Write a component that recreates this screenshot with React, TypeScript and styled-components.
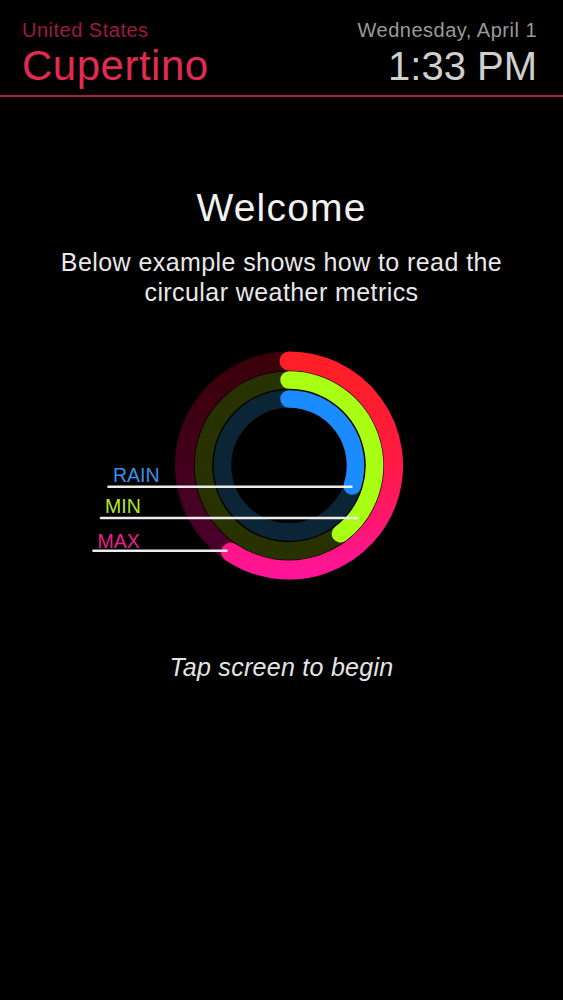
import React from 'react';
import styled, { createGlobalStyle } from 'styled-components';

const GlobalStyle = createGlobalStyle`
  html, body {
    margin: 0;
    padding: 0;
    background: #000;
  }
  body {
    font-family: "Liberation Sans", Arial, sans-serif;
    -webkit-font-smoothing: antialiased;
  }
`;

const Screen = styled.div`
  width: 563px;
  min-height: 1000px;
  background: #000;
  display: flex;
  flex-direction: column;
  align-items: center;
`;

const Header = styled.header`
  align-self: stretch;
  display: flex;
  justify-content: space-between;
  padding: 19px 26px 6px 22px;
`;

const HeaderCol = styled.div<{ $align?: 'left' | 'right' }>`
  display: flex;
  flex-direction: column;
  gap: 2px;
  text-align: ${(p) => p.$align ?? 'left'};
`;

const SmallLine = styled.div<{ $color: string }>`
  font-size: 20px;
  line-height: 22px;
  letter-spacing: 0.5px;
  color: ${(p) => p.$color};
  white-space: nowrap;
`;

const BigLine = styled.div<{ $color: string; $size: number; $spacing?: number }>`
  font-size: ${(p) => p.$size}px;
  line-height: 46px;
  letter-spacing: ${(p) => p.$spacing ?? 0}px;
  color: ${(p) => p.$color};
  white-space: nowrap;
`;

const Divider = styled.div`
  align-self: stretch;
  height: 2px;
  background: #b01a3e;
`;

const Title = styled.h1`
  margin: 89px 0 0;
  font-size: 39px;
  line-height: 44px;
  letter-spacing: 1.2px;
  font-weight: 400;
  color: #f2f2f2;
`;

const Subtitle = styled.p`
  margin: 17px 0 0;
  font-size: 25px;
  line-height: 30px;
  letter-spacing: 0.42px;
  color: #e8e8e8;
  text-align: center;
`;

const Diagram = styled.svg`
  display: block;
  margin-top: 32px;
  align-self: stretch;
`;

const Hint = styled.p`
  margin: 63px 0 0;
  font-size: 25px;
  line-height: 30px;
  letter-spacing: 0.28px;
  font-style: italic;
  color: #e4e4e4;
`;

const CX = 289;
const CY = 466.5;

const pt = (r: number, deg: number) => {
  const a = (deg * Math.PI) / 180;
  return [CX + r * Math.sin(a), CY - r * Math.cos(a)];
};

const arc = (r: number, deg: number) => {
  const [x0, y0] = pt(r, 0);
  const [x1, y1] = pt(r, deg);
  return `M ${x0} ${y0} A ${r} ${r} 0 ${deg > 180 ? 1 : 0} 1 ${x1} ${y1}`;
};

const rings = [
  { r: 104.5, w: 19, deg: 214, color: 'url(#redArc)', track: 'url(#redTrack)' },
  { r: 85.5, w: 17.5, deg: 143, color: '#a8ff14', track: '#283100' },
  { r: 66.5, w: 17.5, deg: 108, color: '#1a8cff', track: '#0c2536' },
];

const labels = [
  { text: 'RAIN', color: '#3a8fe6', x: 113, y: 482.7, lx: 108.5, ly: 487.7, ex: 351.5 },
  { text: 'MIN', color: '#b4e62a', x: 105, y: 514.3, lx: 101, ly: 519, ex: 357 },
  { text: 'MAX', color: '#e8208c', x: 97.5, y: 549.3, lx: 93.5, ly: 551.7, ex: 226.5 },
];

function RingChart() {
  return (
    <Diagram width={563} height={250} viewBox="0 340 563 250">
      <defs>
        <linearGradient id="redArc" gradientUnits="userSpaceOnUse" x1="0" y1="360" x2="0" y2="572">
          <stop offset="0" stopColor="#ff1f24" />
          <stop offset="0.45" stopColor="#ff1a3e" />
          <stop offset="1" stopColor="#ff1496" />
        </linearGradient>
        <linearGradient id="redTrack" gradientUnits="userSpaceOnUse" x1="0" y1="360" x2="0" y2="572">
          <stop offset="0" stopColor="#3a0008" />
          <stop offset="1" stopColor="#4c0030" />
        </linearGradient>
      </defs>
      {rings.map((g) => (
        <g key={g.r}>
          <circle cx={CX} cy={CY} r={g.r} fill="none" stroke={g.track} strokeWidth={g.w} />
          <path d={arc(g.r, g.deg)} fill="none" stroke={g.color} strokeWidth={g.w} strokeLinecap="round" />
        </g>
      ))}
      {labels.map((l) => (
        <g key={l.text}>
          <text
            x={l.x}
            y={l.y}
            fill={l.color}
            fontSize="19.5"
            fontFamily='"Liberation Sans", Arial, sans-serif'
          >
            {l.text}
          </text>
          <line x1={l.lx} y1={l.ly} x2={l.ex} y2={l.ly} stroke="#ececec" strokeWidth={2.6} strokeLinecap="round" />
        </g>
      ))}
    </Diagram>
  );
}

export default function App() {
  return (
    <>
      <GlobalStyle />
      <Screen>
        <Header>
          <HeaderCol>
            <SmallLine $color="#9c1c40">United States</SmallLine>
            <BigLine $color="#e22a52" $size={42} $spacing={0.5}>Cupertino</BigLine>
          </HeaderCol>
          <HeaderCol $align="right">
            <SmallLine $color="#9a9a9a">Wednesday, April 1</SmallLine>
            <BigLine $color="#cfcfcf" $size={40}>1:33 PM</BigLine>
          </HeaderCol>
        </Header>
        <Divider />
        <Title>Welcome</Title>
        <Subtitle>
          Below example shows how to read the
          <br />
          circular weather metrics
        </Subtitle>
        <RingChart />
        <Hint>Tap screen to begin</Hint>
      </Screen>
    </>
  );
}
